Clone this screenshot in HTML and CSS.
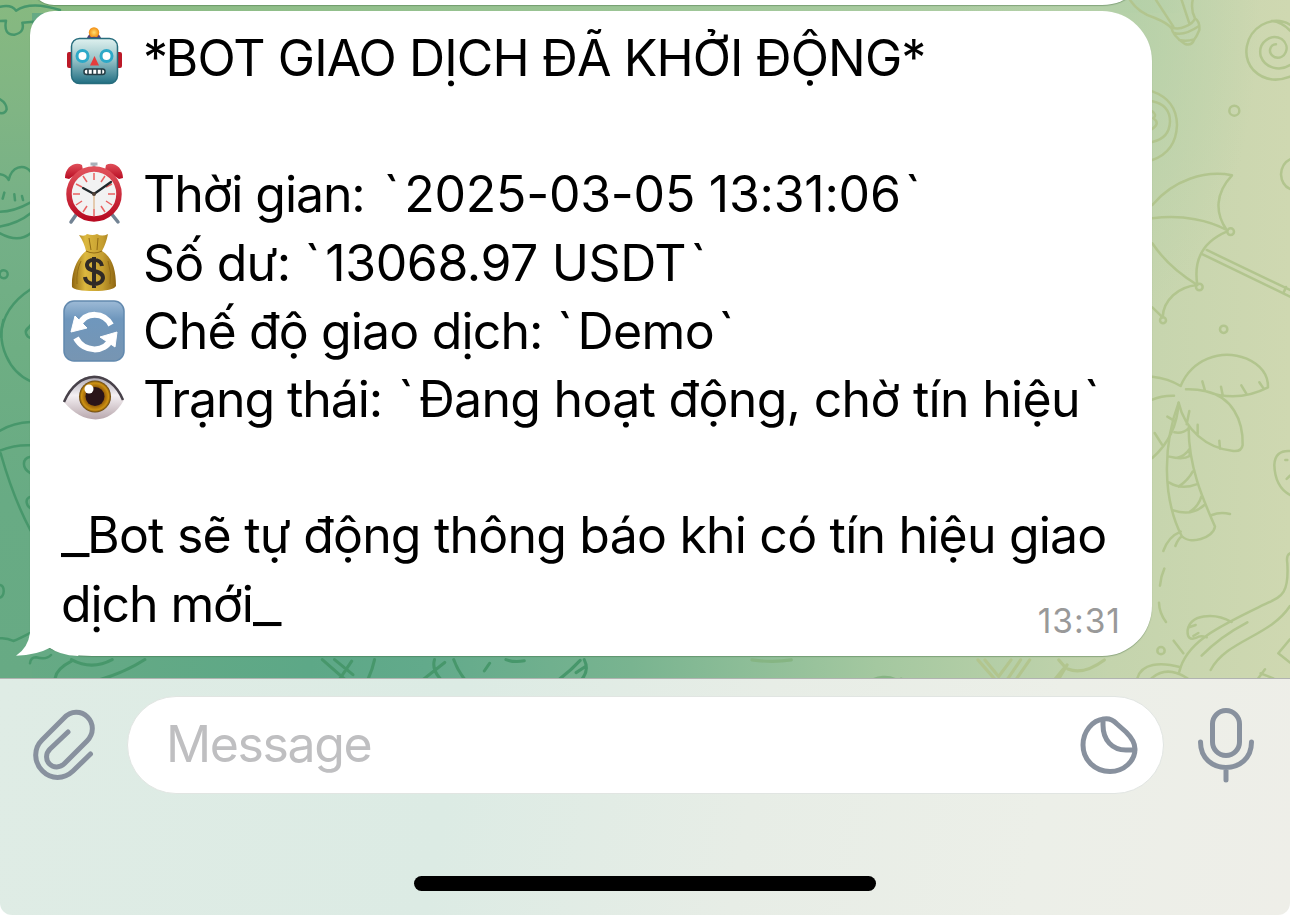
FILE: index.html
```html
<!DOCTYPE html>
<html lang="vi">
<head>
<meta charset="utf-8">
<title>Chat</title>
<link rel="stylesheet" href="styles.css">
</head>
<body>
<div class="screen">
  <main class="chat">
    <svg class="doodles" viewBox="0 0 1290 678" aria-hidden="true">
      <g class="ink-right" transform="translate(1130 0) scale(.3333)">
        <path d="M0 0C20 30 45 45 75 54Q110 68 125 85M78 0L130 80M155 0L178 70M188 0Q182 30 195 55Q210 65 208 90Q200 110 192 120Q185 138 165 132Q128 108 124 82Q145 90 165 80Q190 70 195 55M130 98Q160 110 207 78M148 120Q170 125 192 118"/>
        <path d="M480 74Q440 50 395 75C345 105 335 170 370 210Q415 255 480 230M480 92Q455 65 425 63M480 195C450 215 405 205 392 168C383 125 425 100 455 117C485 140 465 180 435 172C410 160 420 133 438 133"/>
        <circle cx="313" cy="332" r="15"/><circle cx="281" cy="988" r="11"/>
        <path d="M67 274Q140 300 141 375Q138 455 67 480M67 304Q120 315 120 365Q118 415 67 426M67 334Q82 345 70 355Q92 370 67 387M480 478Q455 490 453 523Q455 555 480 567"/>
        <path d="M67 615C130 540 225 510 306 526C255 580 255 640 290 690C240 662 160 643 67 655M290 695C220 725 190 780 202 855C145 820 100 780 67 730M202 855C145 860 100 900 98 952L67 922M230 750L480 870M218 763L480 890M462 875l6-14"/>
        <circle cx="302" cy="695" r="10"/><circle cx="208" cy="861" r="10"/><circle cx="99" cy="961" r="9"/>
      </g>
      <g class="ink-right" transform="translate(1130 330) scale(.3333)">
        <path d="M67 140Q115 145 152 168C185 90 270 55 350 86Q415 115 414 172C350 205 285 205 228 184Q200 177 168 178M67 209Q95 196 132 197M228 184C305 200 340 270 338 345Q335 365 310 363C230 355 165 300 146 218Q140 320 67 384M217 154l8 28M273 170l5 24M334 166l15 25M388 157l13 19M203 284v28M268 332l2 24M178 243l-8 40M112 260l20 12M74 309l22 35"/>
        <path d="M146 218C100 340 95 500 155 618C180 645 250 625 255 590C220 510 175 410 176 292M133 307Q158 312 176 295M118 380Q160 390 179 378L180 355Q165 378 140 384M118 458Q155 480 199 463M188 425Q175 450 146 470M130 541Q185 560 223 525M214 500Q205 530 180 545M246 555Q270 545 300 552M152 605Q115 620 100 663M155 620Q145 625 136 648M103 716Q92 740 90 767M87 818Q88 850 108 876M131 932L160 970"/>
        <circle cx="93" cy="962" r="11"/>
        <path d="M480 363Q435 360 433 405Q435 470 480 495M466 390h6M470 447l10-10M480 670Q468 675 472 700C478 800 450 800 400 825C280 885 170 930 148 1025M480 828C420 920 290 930 242 1020M352 877Q270 920 215 977M305 876C250 845 180 855 173 900Q170 935 200 923Q210 915 230 922M177 892l20-7M190 918l15-9M22 1045C35 1000 90 995 152 1012M65 1045Q110 1005 172 1045M480 928L445 970L480 998M385 1045L405 1018M392 1030L430 1045"/>
      </g>
      <g class="ink-left" transform="scale(.3333)">
        <path d="M0 20Q35 12 48 32C80 10 125 12 180 30M0 63L18 62Q10 105 43 104Q75 98 67 68L100 65M0 298Q20 310 20 328Q15 342 0 339M0 523Q18 525 26 540C35 500 70 490 92 515M13 578l-5 18M43 583l2 18M66 588l3 12M0 635C35 635 60 625 92 607M0 680Q55 670 92 640M0 700Q55 730 92 700M92 868C35 905 5 950 3 1010M92 975L78 993"/>
        <circle cx="11" cy="823" r="12"/>
      </g>
      <g class="ink-left" transform="translate(0 320) scale(.3333)">
        <path d="M10 0C-10 70 25 155 92 184M92 20Q75 25 78 40Q82 52 92 54M0 332Q40 308 92 306M0 392Q45 374 92 376M2 400Q40 535 92 632M92 410C65 415 65 445 92 460M92 530Q78 535 80 548Q82 560 92 565M0 795Q12 798 11 815Q10 830 0 833M0 955Q20 953 40 963Q60 955 88 940M90 1030Q92 1012 108 1012Q140 1020 153 1005"/>
      </g>
      <g class="ink-left" transform="translate(0 640) scale(.408)">
        <path d="M175 48Q225 75 275 48M175 52C140 70 132 90 136 106C190 120 290 90 355 48M535 114q6-12 14-8t12-6M790 48L855 105M820 48L865 85M862 52L820 114M918 48Q910 85 892 114M1065 48Q1055 80 1100 114M1028 104L1090 55M1112 48Q1125 85 1155 114M1200 57L1187 76M1240 48Q1260 56 1285 51M1345 114Q1390 85 1422 50M1432 48Q1450 85 1405 114M1412 80L1435 65"/>
      </g>
      <g class="ink-mid" transform="translate(640 640) scale(.4146)">
        <path d="M545 114C560 85 610 80 632 110l-2-16M270 48Q320 55 365 48"/>
      </g>
      <g class="ink-right" transform="translate(640 640) scale(.4146)">
        <path d="M815 48L873 114L918 48M832 48L865 88L895 48M940 48L898 108L935 114M1010 48L1025 65L985 114M1030 60L998 114M1032 70Q1070 85 1120 48M1030 114Q1045 98 1090 114"/>
      </g>
    </svg>

    <div class="bubble bubble-previous"></div>

    <article class="bubble bubble-current">
      <svg class="tail" viewBox="0 0 70 30" aria-hidden="true"><path d="M14 0V7Q12 22 0 29.700Q21 29 34 21.700Q43 29 62 30L70 20V0Z"/></svg>

      <div class="line">
        <svg class="emoji" viewBox="0 0 64 64">
          <defs>
            <linearGradient id="bot" x2="0" y2="1"><stop stop-color="#dff1ef"/><stop offset=".45" stop-color="#9cc6ca"/><stop offset="1" stop-color="#216f83"/></linearGradient>
            <radialGradient id="lamp"><stop stop-color="#ffdf70"/><stop offset="1" stop-color="#f28c10"/></radialGradient>
          </defs>
          <path d="M24.500 13Q27 6 32 7Q37 6 39.500 13Z" fill="#554477"/><circle cx="32" cy="6.500" r="5.200" fill="url(#lamp)"/><path d="M25 12.500Q32 9 39 12.500Z" fill="#554477"/>
          <rect x="5" y="26" width="7" height="16" rx="2" fill="#bc1927"/><rect x="52" y="26" width="8" height="16" rx="2" fill="#bc1927"/>
          <rect x="9.500" y="12.500" width="46" height="45" rx="8" fill="url(#bot)" stroke="#276d7d" stroke-width="1.500"/>
          <circle cx="20.500" cy="30" r="5.500" fill="#fff" stroke="#2da9c8" stroke-width="3"/><circle cx="44.500" cy="30" r="5.500" fill="#fff" stroke="#2da9c8" stroke-width="3"/>
          <path d="M32.500 30L28 39.500H37Z" fill="#e53d3d"/>
          <rect x="22" y="43" width="21" height="5.500" rx="2.500" fill="#fff" stroke="#243d45" stroke-width="1.500"/><path d="M26 43v6M30.500 43v6M35 43v6M39.500 43v6" stroke="#243d45" stroke-width="1.500"/>
        </svg>
        <span class="text title"><span class="star">*</span>BOT GIAO DỊCH ĐÃ KHỞI ĐỘNG*</span>
      </div>

      <div class="line line-gap">
        <svg class="emoji" viewBox="0 0 64 64">
          <defs><linearGradient id="clock" x2="0" y2="1"><stop stop-color="#e0505a"/><stop offset="1" stop-color="#b80b22"/></linearGradient></defs>
          <path d="M16 50L9 60M48 50L56 60" stroke="#728394" stroke-width="3.500" stroke-linecap="round"/>
          <path d="M32 6V2M28.500 2h7" stroke="#a9b1b9" stroke-width="3"/>
          <path d="M3 16C3 5 13-1 20 3L21 8L7 17ZM61 16C61 5 51-1 44 3L43 8L57 17Z" fill="url(#clock)"/>
          <circle cx="32" cy="32" r="25" fill="#f2f2f2" stroke="url(#clock)" stroke-width="5.500"/>
          <path d="M32 11v7M32 47v7M11 32h7M46 32h7M21 14l4 6M43 14l-4 6M14 22l6 3M50 22l-6 3M14 43l6-4M50 43l-6-4M21 50l4-6M43 50l-4-6" stroke="#e96262" stroke-width="1.500"/>
          <path d="M32 32L21 26M32 32L49 20" stroke="#20282c" stroke-width="2.200" stroke-linecap="round"/><path d="M32 31v16" stroke="#d6a46d"/><circle cx="32" cy="32" r="2" fill="#524338"/>
        </svg>
        <span class="text date-label">Thời gian: </span><span class="text tick">`</span><span class="text date-value">2025-03-05 13:31:06</span><span class="text tick-end">`</span>
      </div>

      <div class="line">
        <svg class="emoji" viewBox="0 0 64 64">
          <defs><linearGradient id="bag"><stop stop-color="#8e6510"/><stop offset=".3" stop-color="#dcb83f"/><stop offset=".7" stop-color="#c49d2f"/><stop offset="1" stop-color="#8f6612"/></linearGradient></defs>
          <path d="M17 4Q23 6 25 3Q31 5 35 3Q40 6 46 3Q44 13 40 20C50 26 54 38 54 55Q51 60 32 60T10 56C9 40 16 26 24 20Q22 11 17 4Z" fill="url(#bag)"/>
          <path d="M24 20Q32 24 40 20M27 7l2 12M36 7l-1 12M19 30Q14 40 15 53M46 30Q50 42 48 53" stroke="#926b14" fill="none"/>
          <path d="M40 35C39 27 25 27 25 34C25 42 41 38 41 47C40 55 24 55 23 46M32 26V57" fill="none" stroke="#302a26" stroke-width="4"/>
        </svg>
        <span class="text balance-label">Số dư: </span><span class="text tick">`</span><span class="text balance-value">13068.97 USDT</span><span class="text tick-end">`</span>
      </div>

      <div class="line">
        <svg class="emoji" viewBox="0 0 64 64">
          <defs><linearGradient id="tile" x2="0" y2="1"><stop stop-color="#9dbad6"/><stop offset=".3" stop-color="#6f97bd"/><stop offset="1" stop-color="#7795b2"/></linearGradient></defs>
          <rect x="2" y="2" width="60" height="60" rx="10" fill="url(#tile)" stroke="#6289ae" stroke-width="1.500"/>
          <path d="M49 26C42 13 24 12 17 26M14 39C22 54 43 54 49 40" fill="none" stroke="#fff" stroke-width="6"/><path d="M13 17L9 33L25 29ZM55 33L38 38L53 48Z" fill="#fff" stroke="#fff" stroke-width="1" stroke-linejoin="round"/>
        </svg>
        <span class="text mode-label">Chế độ giao dịch: </span><span class="text tick">`</span><span class="text mode-value">Demo</span><span class="text tick-end">`</span>
      </div>

      <div class="line">
        <svg class="emoji" viewBox="0 0 64 64">
          <defs>
            <linearGradient id="white" x2="0" y2="1"><stop stop-color="#aaa5b0"/><stop offset=".45" stop-color="#f4f0f3"/><stop offset="1" stop-color="#b9a8ae"/></linearGradient>
            <radialGradient id="iris"><stop stop-color="#57340e"/><stop offset=".6" stop-color="#9a6109"/><stop offset=".85" stop-color="#cf9313"/><stop offset="1" stop-color="#61400d"/></radialGradient>
          </defs>
          <path d="M2 35C16 0 48 0 62 33C48 59 21 58 2 35Z" fill="url(#white)"/>
          <path d="M2 35C16 2 48 2 61 33" fill="none" stroke="#48424a" stroke-width="2.500"/>
          <circle cx="33" cy="29.500" r="16" fill="url(#iris)"/><circle cx="33" cy="29.500" r="9.500" fill="#2b1519"/><circle cx="27" cy="22" r="4.500" fill="#fff"/>
        </svg>
        <span class="text status-label">Trạng thái: </span><span class="text tick">`</span><span class="text status-value">Đang hoạt động, chờ tín hiệu</span><span class="text tick-end">`</span>
      </div>

      <div class="line line-gap"><span class="text note"><span class="underscore">_</span>Bot sẽ tự động thông báo khi có tín hiệu giao</span></div>
      <div class="line line-last"><span class="text note-end">dịch mới<span class="underscore">_</span></span><time class="time">13:31</time></div>
    </article>
  </main>

  <footer class="composer">
    <div class="composer-row">
      <svg class="icon clip" viewBox="0 0 66 74"><path d="M60.500 46L43 63C34 71.500 21 71.500 12.500 63C3.500 54 3.500 40.500 12 32L34 10C41 2.500 51 2.500 57.500 9C64 15.500 64 26 57 33L34.500 55.500C30 60 23.500 60 19.500 56C15.500 52 15.500 45.500 20 41L38 24"/></svg>
      <div class="field">
        <span class="placeholder">Message</span>
        <svg class="icon sticker" viewBox="0 0 60 60"><path d="M24 4C12 5 3 17 3 30C3 45 15 56.500 30 56.500C44 56.500 55 46 55 34C55 27 51 22 46 17L37 9C33 5 29 3 24 4ZM23 4V10C23 25 32 35 46 35H55"/></svg>
      </div>
      <svg class="icon mic" viewBox="0 0 60 78"><rect x="16.500" y="4.500" width="27" height="45" rx="13.500"/><path d="M4.500 36C4.500 70 55.500 70 55.500 36M30 62V74"/></svg>
    </div>
    <div class="home-indicator"></div>
  </footer>
</div>
</body>
</html>
```
FILE: styles.css
```css
* { box-sizing: border-box; }
body { margin: 0; background: #fff; font-family: Inter, "Noto Sans", sans-serif; color: #000; }
.screen { width: 1290px; height: 915px; display: flex; flex-direction: column; overflow: hidden; border-radius: 0 0 12px 12px; }
.chat {
  position: relative; height: 678px; overflow: hidden; padding-bottom: 22px;
  display: flex; flex-direction: column; justify-content: flex-end; gap: 6px;
  background:
    linear-gradient(180deg, #87b980 0, #80b584 110px, #74b087 230px, #6eae83 350px, #68ab84 500px, #67aa84) 0 0 / 32px 100% no-repeat,
    radial-gradient(ellipse 150px 330px at 1110px 0, #b4d0a8, rgba(180, 208, 168, 0)) 0 0 / 100% 100% no-repeat,
    linear-gradient(90deg, #87b980, #9cc596 50%, #b4d0a8 86%, rgba(180, 208, 168, 0) 92%) 0 0 / 100% 13px no-repeat,
    linear-gradient(90deg, #67aa84, #5da887 24%, #62aa8b 33%, #79b490 49%, #a4c8a0 68%, #c4d4ad 86%, #cfd8b1);
}
.doodles { position: absolute; inset: 0; width: 1290px; height: 678px; fill: none; stroke-width: 7.5; stroke-linecap: round; stroke-linejoin: round; }
.ink-right { stroke: #b2c58e; }
.ink-mid { stroke: #86b583; }
.ink-left { stroke: #47976b; }
.bubble { position: relative; width: 1122px; margin-left: 30px; background: #fff; box-shadow: 0 1px 1px rgba(60, 100, 60, .4); flex: none; }
.bubble-previous { height: 160px; border-radius: 24px 50px 50px 24px; }
.bubble-current { height: 645px; padding: 13px 31px 0; border-radius: 24px 50px 50px 62px / 24px 50px 50px 30px; }
.tail { position: absolute; left: -14px; bottom: 0; width: 70px; height: 30px; fill: #fff; }
.line { height: 68.200px; display: flex; align-items: center; }
.line-gap { margin-top: 68.200px; }
.emoji { flex: none; width: 64px; height: 64px; margin: 0 17px 0 1px; overflow: visible; }
.text { font-size: 50px; line-height: 68px; white-space: pre; }
.title { letter-spacing: -.9px; }
.star { letter-spacing: -2.500px; }
.tick { letter-spacing: 4.500px; }
.tick-end { margin-left: 4px; }
.date-label { letter-spacing: -1.100px; margin-right: 6px; }
.date-value { letter-spacing: -.25px; }
.balance-label { letter-spacing: -.8px; margin-right: 1px; }
.balance-value { letter-spacing: -.4px; }
.mode-label { letter-spacing: -.85px; margin-right: 1px; }
.mode-value { letter-spacing: -.6px; }
.status-label { letter-spacing: -1.100px; margin-right: 3px; }
.status-value { letter-spacing: -.7px; }
.note { letter-spacing: -.8px; }
.note-end { letter-spacing: -1.100px; }
.underscore { display: inline-block; transform: scaleX(1.25); transform-origin: 0 50%; margin-right: 4px; }
.line-last { justify-content: space-between; }
.time { font-size: 33.500px; line-height: 40px; letter-spacing: 1px; color: #999; padding-top: 34px; }
.composer { height: 237px; flex: none; border-top: 1px solid #b1b3b1; background: linear-gradient(100deg, #dfece5 0, #dcebe4 35%, #e7ede6 58%, #ecefe8 80%, #eeeee8); display: flex; flex-direction: column; justify-content: space-between; align-items: center; padding: 18px 0 24px; }
.composer-row { width: 100%; display: flex; align-items: center; padding: 0 34px 0 30px; }
.icon { flex: none; fill: none; stroke: #88919e; stroke-width: 5; stroke-linecap: round; stroke-linejoin: round; }
.clip { width: 66px; height: 74px; margin-bottom: 1px; }
.field { width: 1037px; height: 98px; margin-left: 31px; margin-top: -1px; border: 1px solid #e1e5e2; border-radius: 49px; background: #fff; display: flex; align-items: center; justify-content: space-between; padding: 0 23px 0 38px; }
.placeholder { font-size: 50px; line-height: 60px; letter-spacing: -1.400px; color: #bfbfc1; padding-bottom: 3px; }
.sticker { width: 60px; height: 60px; }
.mic { width: 60px; height: 78px; margin-left: 32px; margin-bottom: 1px; }
.home-indicator { width: 462px; height: 15px; border-radius: 8px; background: #000; }
```
